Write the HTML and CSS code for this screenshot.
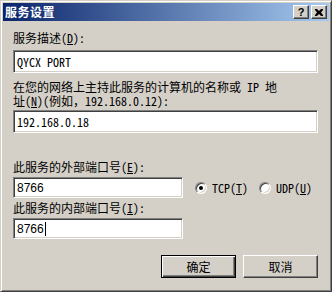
FILE: index.html
```html
<!DOCTYPE html>
<html>
<head>
<meta charset="utf-8">
<link rel="stylesheet" href="styles.css">
</head>
<body>
<div class="window">
  <div class="titlebar">
    <span class="title">服务设置</span>
    <div class="tbtns">
      <div class="tbtn">?</div>
      <div class="tbtn x">
        <svg width="8" height="7" viewBox="0 0 8 7"><path d="M0 0h2l2 2 2-2h2v1l-2 2.5 2 2.5v1h-2l-2-2-2 2h-2v-1l2-2.5-2-2.5z" fill="#000"/></svg>
      </div>
    </div>
  </div>
  <div class="content">
    <div class="label l1">服务描述(<u>D</u>):</div>
    <div class="field wide f1">QYCX PORT</div>
    <div class="label l2">在您的网络上主持此服务的计算机的名称或 IP 地</div>
    <div class="label l2b">址(<u>N</u>)(例如，192.168.0.12):</div>
    <div class="field wide f2">192.168.0.18</div>
    <div class="label l3">此服务的外部端口号(<u>E</u>):</div>
    <div class="row">
      <div class="field narrow sans">8766</div>
      <div class="radio on"><span class="dot"></span></div>
      <span class="rlabel">TCP(<u>T</u>)</span>
      <div class="radio udp"></div>
      <span class="rlabel">UDP(<u>U</u>)</span>
    </div>
    <div class="label l4">此服务的内部端口号(<u>I</u>):</div>
    <div class="field narrow sans f4">8766<span class="caret"></span></div>
    <div class="buttons">
      <div class="btn default"><span>确定</span></div>
      <div class="btn"><span>取消</span></div>
    </div>
  </div>
</div>
</body>
</html>
```

FILE: styles.css
```css
* { box-sizing: border-box; }
html, body { margin: 0; padding: 0; }
body {
  width: 332px;
  height: 292px;
  background: #d4d0c8;
  font-family: "Noto Sans Mono CJK SC", "Noto Sans CJK SC", sans-serif;
  font-size: 12px;
  color: #000;
}
.window {
  width: 332px;
  height: 292px;
  background: #d4d0c8;
  border-style: solid;
  border-width: 1px;
  border-color: #d4d0c8 #404040 #404040 #d4d0c8;
  box-shadow: inset 1px 1px #fff, inset -1px -1px #808080;
  padding: 2px;
}
.titlebar {
  height: 18px;
  background: linear-gradient(to right, #0a246a, #a6caf0);
  display: flex;
  align-items: center;
  justify-content: space-between;
  padding: 0 2px 0 2px;
}
.title {
  color: #fff;
  font-weight: bold;
  font-size: 12px;
  line-height: 14px;
  letter-spacing: 0.5px;
}
.tbtns { display: flex; gap: 2px; }
.tbtn {
  width: 16px;
  height: 14px;
  background: #d4d0c8;
  border-style: solid;
  border-width: 1px;
  border-color: #fff #404040 #404040 #fff;
  box-shadow: inset -1px -1px #808080;
  font-family: "Liberation Sans", sans-serif;
  font-weight: bold;
  font-size: 11px;
  line-height: 12px;
  text-align: center;
  display: flex;
  align-items: center;
  justify-content: center;
}
.content {
  padding: 0 0 0 10px;
}
.label {
  height: 14px;
  line-height: 14px;
  white-space: nowrap;
}
.l1 { margin-top: 10px; }
.l2 { margin-top: 7px; }
.l2b { margin-top: 0; }
.l3 { margin-top: 27px; }
.l4 { margin-top: 3px; }
.field {
  background: #fff;
  border-style: solid;
  border-width: 1px;
  border-color: #808080 #fff #fff #808080;
  box-shadow: inset 1px 1px #404040, inset -1px -1px #d4d0c8;
  padding: 0 3px;
  display: flex;
  align-items: center;
  white-space: nowrap;
}
.wide { width: 305px; height: 23px; }
.f1 { margin-top: 5px; }
.f2 { margin-top: 2px; }
.narrow { width: 170px; height: 21px; }
.sans { font-family: "Liberation Sans", sans-serif; font-size: 12px; padding-left: 3px; }
.f4 { margin-top: 3px; }
.caret {
  display: inline-block;
  width: 1px;
  height: 14px;
  background: #000;
  margin-left: 1px;
}
.row {
  margin-top: 3px;
  display: flex;
  align-items: center;
}
.radio {
  width: 12px;
  height: 12px;
  border-radius: 50%;
  background: #fff;
  border-style: solid;
  border-width: 1px;
  border-color: #808080 #fff #fff #808080;
  box-shadow: inset 1px 1px #404040, inset -1px -1px #d4d0c8;
  margin-left: 12px;
  display: flex;
  align-items: center;
  justify-content: center;
}
.radio.udp { margin-left: 11px; }
.dot {
  width: 4px;
  height: 4px;
  border-radius: 50%;
  background: #000;
}
.rlabel {
  margin-left: 5px;
  line-height: 14px;
}
.buttons {
  margin-top: 16px;
  display: flex;
  justify-content: flex-end;
  gap: 7px;
  padding-right: 11px;
}
.btn {
  width: 75px;
  height: 23px;
  background: #d4d0c8;
  border-style: solid;
  border-width: 1px;
  border-color: #fff #404040 #404040 #fff;
  box-shadow: inset -1px -1px #808080;
  display: flex;
  align-items: center;
  justify-content: center;
  line-height: 14px;
}
.btn.default {
  border: 1px solid #000;
  box-shadow: inset 1px 1px #fff, inset -1px -1px #404040, inset -2px -2px #808080;
}
```
